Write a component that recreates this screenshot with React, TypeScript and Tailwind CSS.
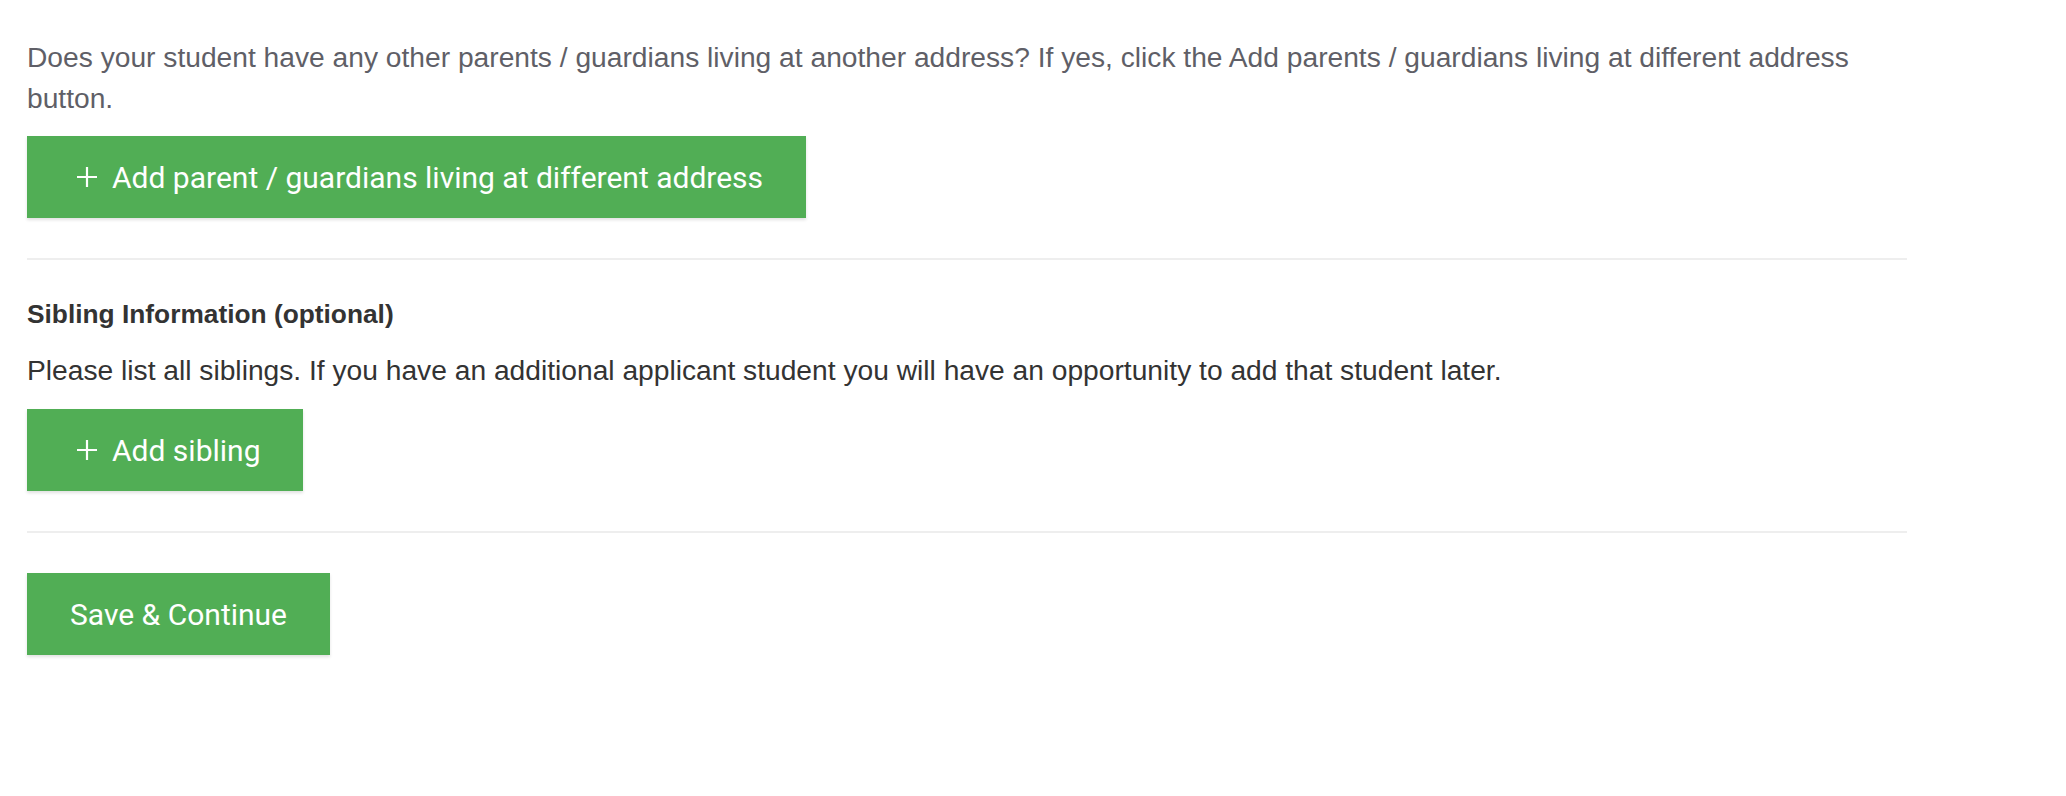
import React from "react";

function Plus() {
  return (
    <svg width="20" height="20" viewBox="0 0 20 20" className="ml-[7px] shrink-0">
      <path d="M10 0 V20 M0 10 H20" stroke="#ffffff" strokeWidth="2.2" fill="none" />
    </svg>
  );
}

function GreenButton({ children, icon }: { children: React.ReactNode; icon?: boolean }) {
  return (
    <button
      className="flex h-[82px] items-center gap-[15px] bg-[#51ae55] px-[43px] text-[30px] text-white shadow-[0_2px_3px_rgba(0,0,0,0.12)]"
      style={{ fontFamily: "Roboto, 'Liberation Sans', sans-serif" }}
    >
      {icon && <Plus />}
      <span>{children}</span>
    </button>
  );
}

export default function App() {
  return (
    <div
      className="min-h-[796px] w-full bg-white pl-[27px] pt-[37px]"
      style={{ fontFamily: "'Liberation Sans', Arial, sans-serif" }}
    >
      <div className="w-[1880px]">
        <p className="text-[28.2px] leading-[41px] text-[#5f5f67]">
          Does your student have any other parents / guardians living at another address? If yes, click the Add parents / guardians living at different address button.
        </p>
        <div className="mt-[17px] flex">
          <GreenButton icon>Add parent / guardians living at different address</GreenButton>
        </div>
        <div className="mt-[40px] h-[2px] bg-[#eeeeee]" />
        <h3 className="mt-[34px] text-[26.3px] font-bold leading-[41px] text-[#333333]">
          Sibling Information (optional)
        </h3>
        <p className="mt-[15px] text-[28.2px] leading-[41px] text-[#333333]">
          Please list all siblings. If you have an additional applicant student you will have an opportunity to add that student later.
        </p>
        <div className="mt-[18px] flex">
          <GreenButton icon>Add sibling</GreenButton>
        </div>
        <div className="mt-[40px] h-[2px] bg-[#eeeeee]" />
        <div className="mt-[40px] flex">
          <GreenButton>Save &amp; Continue</GreenButton>
        </div>
      </div>
    </div>
  );
}
